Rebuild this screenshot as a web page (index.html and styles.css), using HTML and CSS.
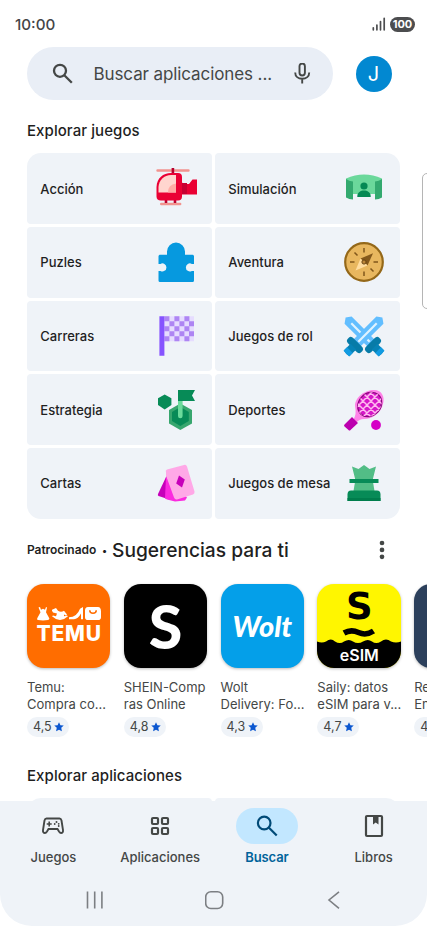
FILE: index.html
```html
<!DOCTYPE html>
<html lang="es">
<head>
<meta charset="utf-8">
<meta name="viewport" content="width=device-width, initial-scale=1">
<title>Buscar</title>
<link rel="stylesheet" href="styles.css">
</head>
<body>
<div class="phone">
  <header class="status">
    <span class="clock">10:00</span>
    <span class="status-right">
      <svg class="signal" width="14" height="14" viewBox="0 0 14 14"><path d="M1.300 10.800v2M4.900 8v4.800M8.500 4.600v8.200M12.200 1.300v11.500" stroke="#4c4d4f" stroke-width="1.700" stroke-linecap="round"/></svg>
      <span class="battery">100</span>
    </span>
  </header>

  <div class="top">
    <div class="search">
      <svg class="search-icon" width="22" height="22" viewBox="0 0 22 22" fill="none" stroke="#444746" stroke-width="2.300"><circle cx="8" cy="7.800" r="6"/><path d="M12.300 12.300l7.500 7.500"/></svg>
      <span class="search-text">Buscar aplicaciones ...</span>
      <svg class="mic" width="18" height="22" viewBox="0 0 18 22" fill="none" stroke="#444746" stroke-width="1.900"><rect x="6.500" y="0.500" width="5.400" height="12" rx="2.700"/><path d="M2.200 9.400c0 4 3 6.400 7 6.400s7-2.400 7-6.400M9.200 16v4.600"/></svg>
    </div>
    <span class="avatar">J</span>
  </div>

  <main>
    <h2 class="heading games">Explorar juegos</h2>
    <section class="grid">
      <div class="tile"><span>Acción</span>
        <svg viewBox="0 0 42 42"><path d="M2.500 2.500h31M6.200 36h19" stroke="#f2938f" stroke-width="2.400" stroke-linecap="round"/><path d="M17.900 0v6M11 30v5M20 30v5" stroke="#b8002d" stroke-width="2.600"/><path d="M1.500 19C2 10 8 5 16 5h7q4 0 4 4v5q0 2 2 2h5l3.500-4.500H42v15H27v2q0 4-4 4H6q-4.500 0-4.500-4z" fill="#ea0034"/><path d="M32 15v11h-5V15z" fill="#c70032"/><path d="M3.500 24.500V19C4 12 9 7 16 7h5v17.500z" fill="#ffd5cf"/><path d="M13 24.500q0-8 8-9v9z" fill="#ffaba5"/></svg></div>
      <div class="tile"><span>Simulación</span>
        <svg viewBox="0 -1.500 42 42"><path d="M3 9Q21 1 39 9v15.500H3z" fill="#6bd89b"/><path d="M3 9.500q3 2 7 2.500v18q-4 0-7-2zM39 9.500q-3 2-7 2.500v18q4 0 7-2z" fill="#33a96f"/><circle cx="21" cy="16.500" r="3.600" fill="#058954"/><path d="M14.300 27.500v-1c0-7.500 13.400-7.500 13.400 0v1z" fill="#058954"/></svg></div>
      <div class="tile"><span>Puzles</span>
        <svg viewBox="0 0 42 42"><path d="M5 13.700h7V10.500a9 9 0 0 1 18 0v3.200h7.500q1.500 0 1.500 1.500v7.700h-2.200a4 4 0 1 0 0 7H39v9.500q0 1.500-1.500 1.500H5q-1.500 0-1.500-1.500v-9.500h2a4 4 0 1 0 0-7h-2v-7.700Q3.500 13.700 5 13.700z" fill="#0699df"/></svg></div>
      <div class="tile"><span>Aventura</span>
        <svg viewBox="0 0 42 42"><circle cx="21" cy="21" r="18.800" fill="#e8b75f" stroke="#946819" stroke-width="2.200"/><path d="M21 7v4.500M21 30.500V35M7 21h4.500M30.500 21H35M11.500 11.500l3 3M27.500 27.500l3 3" stroke="#80571b" stroke-width="1.500"/><path d="M30 12.300L24.500 24.500l-7-7z" fill="#84591c"/><path d="M12.500 29.500l5-12 7 7z" fill="#ffdda0"/><circle cx="21" cy="21" r="2.100" fill="#bd873a" stroke="#694513"/></svg></div>
      <div class="tile"><span>Carreras</span>
        <svg viewBox="0 0 42 42"><path d="M9.400 1.300h29.600v25H9.400z" fill="#e6dcff"/><path d="M16.900 1.300V26.300M26.900 1.300V26.300M36.500 1.300V26.300" stroke="#ae85f3" stroke-width="5" stroke-dasharray="0 5 5 0"/><path d="M11.900 1.300V26.300M21.900 1.300V26.300M31.900 1.300V26.300" stroke="#ae85f3" stroke-width="5" stroke-dasharray="5"/><path d="M4.400 1.300h5v39.500h-5z" fill="#8653ff"/></svg></div>
      <div class="tile"><span>Juegos de rol</span>
        <svg viewBox="0 0 42 42">
          <g transform="rotate(-45 21 21)"><path d="M16-1.500L21-5l5 3.500V32H16z" fill="#62beff"/><path d="M21 3v26" stroke="#e0f3ff" stroke-width="2.200"/><path d="M11.500 33q0-3 4-3h11q4 0 4 3v2q0 2-3 2.500h-13q-3-.5-3-2.500z" fill="#077ba8"/><path d="M17 36h8v9.500q-4 1.500-8 0z" fill="#0782b5"/><path d="M17 41h8v5h-8z" fill="#119be2"/></g>
          <g transform="rotate(45 21 21)"><path d="M16-1.500L21-5l5 3.500V32H16z" fill="#62beff"/><path d="M21 3v26" stroke="#e0f3ff" stroke-width="2.200"/><path d="M11.500 33q0-3 4-3h11q4 0 4 3v2q0 2-3 2.500h-13q-3-.5-3-2.500z" fill="#077ba8"/><path d="M17 36h8v9.500q-4 1.500-8 0z" fill="#0782b5"/><path d="M17 41h8v5h-8z" fill="#119be2"/></g>
        </svg></div>
      <div class="tile"><span>Estrategia</span>
        <svg viewBox="0 0 42 42"><path d="M9.700 5.500l6.700 3.700V16l-6.700 4.500L3 16V9.200z" fill="#078b57"/><path d="M25.300 14.500L37 21v13.500L25.300 41 14 34.500V21z" fill="#37a66e"/><path d="M25.300 18l8.500 5v9L25.300 37 17 32v-9z" fill="#078b57"/><path d="M25.300 11v16" stroke="#6bda9b" stroke-width="4.600" stroke-linecap="round"/><path d="M23 1h17l-3 5.500 3 5.500H23z" fill="#078b57"/></svg></div>
      <div class="tile"><span>Deportes</span>
        <svg viewBox="0 0 42 42"><defs><clipPath id="strings"><ellipse cx="26.700" cy="15.500" rx="11" ry="13" transform="rotate(42 26.700 15.500)"/></clipPath></defs><path d="M10 31Q14 26 12 17C12 8 22 1 31 1c8 0 11 7 9 14-2 9-11 15-19 15q-5 0-8 4z" fill="#ff83e8"/><ellipse cx="26.700" cy="15.500" rx="11" ry="13" transform="rotate(42 26.700 15.500)" fill="#d617c8" stroke="#8b087d" stroke-width="1.300"/><g clip-path="url(#strings)" stroke="#ffb9ef" stroke-width="1.500"><path d="M5 13l24 24M8.500 8.500l24 24M12 4l24 24M15.500-.5l24 24M19-5l24 24M24-8l24 24M8 24L37-5M12 28L41-1M16 32L45 3M20 36L49 7M4 20L33-9"/></g><path d="M1.500 35.500L9 28l6 6-7.500 7q-1 1-2 0l-4-3.500q-1-1 0-2z" fill="#bc00af"/><circle cx="33" cy="36" r="4.900" fill="#d500c6"/></svg></div>
      <div class="tile"><span>Cartas</span>
        <svg viewBox="0 -2.500 42 42"><path d="M3 29.500l8.500-18 7 24q-7-1-15-4-1-.5-.5-2z" fill="#c600ba"/><path d="M10 34L11 12l21 21-2 3-10 1-8-2z" fill="#fb2adf"/><path d="M11 8q-1-2 1-3l17-4.500q2-.8 3 1.500L39.500 27q.5 2-1.500 3l-16 5q-2 .5-3-2L11 11z" fill="#ffa8e7"/><path d="M24 11l5.800 4L27 23l-5.800-4z" fill="#c600ba"/></svg></div>
      <div class="tile"><span>Juegos de mesa</span>
        <svg viewBox="0 -2 42 42"><path d="M9 2.500l6.500 2.500L21 1l5.500 4L33 2.500l-3.500 14h-17z" fill="#52bd86"/><path d="M12 18h18l1.500 9h-21z" fill="#52bd86"/><path d="M6.500 15h29v4h-29z" fill="#078b57"/><path d="M8 26.500h26q3.500 0 3.500 4V37h-33v-6.500q0-4 3.500-4z" fill="#078b57"/><path d="M4.500 34h33v3h-33z" fill="#007d4c"/></svg></div>
    </section>

    <div class="sponsored">
      <span class="label">Patrocinado</span><span class="dot">•</span><h2>Sugerencias para ti</h2>
      <svg class="more" width="6" height="20" viewBox="0 0 6 20" fill="#444746"><circle cx="3" cy="3" r="2.350"/><circle cx="3" cy="9.900" r="2.350"/><circle cx="3" cy="16.800" r="2.350"/></svg>
    </div>

    <section class="apps">
      <article class="app">
        <div class="logo temu">
          <svg width="64" height="14" viewBox="0 0 64 15" preserveAspectRatio="none" fill="#fff"><path d="M3 0l1 3 2-1 2 1 1-3 1 .5-1 5 3 6q1 2-1 2.500-5 1-10 0-1.500-.5-.5-2.500l3-6-2-5z"/><path d="M15 3l4-2 2 3q3 2 6 0l3 4-1 1-2-1v2l3-1 1 1q-8 8-16 0l1-1 3 1 1-3-4-1-1-2z"/><path d="M32 11q8 0 11-9l3-2v13h-2V7q-3 6-7 6h-5z"/><path fill-rule="evenodd" d="M51 0h10q3 0 3 5v6q0 3-3 3H51q-3 0-3-3V4q0-4 3-4zm1 3.500q0 4 4 4t4-4h-1.500q0 2.500-2.500 2.500t-2.500-2.500z"/></svg>
          <span>TEMU</span>
        </div>
        <p>Temu:<br>Compra co...</p><span class="rating">4,5 <svg viewBox="0 0 12 12"><path d="M6 .3l1.700 3.500 4 .5-3 2.700.8 4L6 9.200 2.500 11l.8-4-3-2.700 4-.5z"/></svg></span>
      </article>
      <article class="app">
        <div class="logo shein"><span>S</span></div>
        <p>SHEIN-Comp<br>ras Online</p><span class="rating">4,8 <svg viewBox="0 0 12 12"><path d="M6 .3l1.700 3.500 4 .5-3 2.700.8 4L6 9.200 2.500 11l.8-4-3-2.700 4-.5z"/></svg></span>
      </article>
      <article class="app">
        <div class="logo wolt"><span>Wolt</span></div>
        <p>Wolt<br>Delivery: Fo...</p><span class="rating">4,3 <svg viewBox="0 0 12 12"><path d="M6 .3l1.700 3.500 4 .5-3 2.700.8 4L6 9.200 2.500 11l.8-4-3-2.700 4-.5z"/></svg></span>
      </article>
      <article class="app">
        <div class="logo saily"><svg width="84" height="84" viewBox="0 0 84 84"><path d="M0 57.500q5 2 9 0 5-4 9 0 5 3 9 0 5-3 9 0 5 3 10 0 5-3 9 0 4 3 9 0 5-4 10 0 5 2 10 0v27H0z"/><path d="M27 49q7-4 14.500-.5T56.500 47" fill="none" stroke="#000" stroke-width="5.500"/></svg><b>S</b><span>eSIM</span></div>
        <p>Saily: datos<br>eSIM para v...</p><span class="rating">4,7 <svg viewBox="0 0 12 12"><path d="M6 .3l1.700 3.500 4 .5-3 2.700.8 4L6 9.200 2.500 11l.8-4-3-2.700 4-.5z"/></svg></span>
      </article>
      <article class="app">
        <div class="logo revolut"></div>
        <p>Re<br>En</p><span class="rating">4</span>
      </article>
    </section>
    <h2 class="heading explore">Explorar aplicaciones</h2>
    <div class="peek"><i></i><i></i></div>
  </main>

  <footer class="bottom">
    <nav class="tabs">
      <div class="tab"><div class="pill"><svg width="24" height="20" viewBox="0 0 24 20" fill="none" stroke="#444746" stroke-width="1.900"><path d="M5.500 2.500h13q1.500 0 2 2l1.500 9.500q.3 3-2 3-1 0-2-1.500L16.500 13h-9L6 15.500Q5 17 4 17q-2.300 0-2-3L3.500 4.500q.5-2 2-2z"/><path d="M8.200 5.500v5M5.700 8h5" stroke-width="1.600"/><g fill="#444746" stroke="none"><circle cx="15.500" cy="6" r="1"/><circle cx="13.700" cy="8" r=".9"/><circle cx="17.700" cy="7.800" r=".9"/><circle cx="17.700" cy="10" r=".9"/></g></svg></div><span>Juegos</span></div>
      <div class="tab"><div class="pill"><svg width="20" height="20" viewBox="0 0 20 20" fill="none" stroke="#444746" stroke-width="2.200"><rect x="2" y="2" width="6" height="6" rx="1"/><rect x="12" y="2" width="6" height="6" rx="1"/><rect x="2" y="12" width="6" height="6" rx="1"/><rect x="12" y="12" width="6" height="6" rx="1"/></svg></div><span>Aplicaciones</span></div>
      <div class="tab active"><div class="pill"><svg width="22" height="22" viewBox="0 0 22 22" fill="none" stroke="#004a77" stroke-width="2.200"><circle cx="8.200" cy="8" r="6.300"/><path d="M12.700 12.500l8 8"/></svg></div><span>Buscar</span></div>
      <div class="tab"><div class="pill"><svg width="20" height="24" viewBox="0 0 20 24" fill="none" stroke="#444746" stroke-width="2.200"><rect x="2" y="2" width="16" height="20" rx="1"/><path d="M9 2h5.500v8.500L11.700 8.500 9 10.500z" fill="#444746" stroke="none"/></svg></div><span>Libros</span></div>
    </nav>
    <div class="system">
      <svg width="18" height="20" viewBox="0 0 18 20"><path d="M1.500 1.500v17M8.700 1.500v17M15.900 1.500v17" stroke="#7c7f83" stroke-width="1.600"/></svg>
      <svg width="20" height="20" viewBox="0 0 20 20"><rect x="0.700" y="1.700" width="17" height="16.800" rx="5.200" fill="none" stroke="#7c7f83" stroke-width="1.600"/></svg>
      <svg width="14" height="20" viewBox="0 0 14 20"><path d="M12 1.800L2 10l10 8.300" fill="none" stroke="#7c7f83" stroke-width="1.600"/></svg>
    </div>
  </footer>
  <div class="edge-handle"></div>
</div>
</body>
</html>
```

FILE: styles.css
```css
* { box-sizing: border-box; }
body { margin: 0; background: #fff; font-family: Inter, "Liberation Sans", sans-serif; color: #1f1f1f; }
h2, p { margin: 0; font-weight: 500; }
svg { display: block; flex: none; }
.phone { position: relative; width: 427px; height: 926px; overflow: hidden; display: flex; flex-direction: column; }
.status { height: 47px; padding: 1px 12px 0 15px; display: flex; justify-content: space-between; align-items: center; }
.clock { font-size: 15.2px; font-weight: 500; color: #444547; }
.status-right { display: flex; align-items: center; gap: 4px; }
.battery { width: 25px; height: 15px; border-radius: 8px; background: #4c4d4f; color: #fff; font-size: 11px; line-height: 15px; font-weight: 700; text-align: center; }
.top { display: flex; align-items: center; height: 53px; padding-left: 27px; }
.search { width: 306px; height: 53px; border-radius: 27px; background: #e9eef6; display: flex; align-items: center; padding: 0 22px 0 25px; }
.search-text { margin-left: 19.500px; width: 178px; font-size: 17px; letter-spacing: -0.1px; color: #444746; white-space: nowrap; }
.mic { margin-left: auto; }
.avatar { width: 36px; height: 36px; margin-left: 22.500px; border-radius: 50%; background: #0288d1; color: #fff; font-size: 20px; line-height: 36px; text-align: center; }
main { flex: 1; min-height: 0; overflow: hidden; }
.heading { font-size: 15px; line-height: 20px; letter-spacing: 0.07px; white-space: nowrap; }
.games { margin: 21px 0 12.300px 27px; }
.grid { margin-left: 27px; width: 373px; display: grid; grid-template-columns: 185px 185px; grid-auto-rows: 70.670px; gap: 3px; border-radius: 14px; overflow: hidden; }
.tile { border-radius: 4px; background: #eff3f8; display: flex; align-items: center; justify-content: space-between; padding: 0 15.500px 0 13.300px; font-size: 13px; font-weight: 500; white-space: nowrap; }
.tile svg { width: 42px; height: 42px; overflow: visible; }
.sponsored { height: 65.400px; padding: 0 42px 3px 27px; display: flex; align-items: center; white-space: nowrap; }
.label { width: 70px; font-size: 12px; font-weight: 600; letter-spacing: -0.05px; }
.dot { width: 15px; text-align: center; font-size: 10px; }
.sponsored h2 { font-size: 19.200px; font-weight: 450; }
.more { margin-left: auto; }
.apps { display: flex; gap: 13.400px; padding-left: 27px; }
.app { width: 83.400px; flex: none; }
.logo { position: relative; width: 83.400px; height: 84px; border-radius: 17px; overflow: hidden; box-shadow: 0 1px 3px #0004; display: flex; align-items: center; justify-content: center; color: #fff; }
.temu { flex-direction: column; background: #ff6d00; }
.temu span { font: 800 21px/20px Inter, sans-serif; letter-spacing: 0.8px; margin: 3px -0.8px 0 0; }
.shein { background: #000; }
.shein span { font: 900 61px/84px Lato, sans-serif; }
.wolt { background: #049fe9; }
.wolt span { font: italic 900 29px/30px Lato, sans-serif; }
.saily { background: #fff600; }
.saily b { position: absolute; left: 0; width: 84px; top: 4px; text-align: center; color: #000; font: 700 37px/38px "DejaVu Sans", sans-serif; }
.saily span { position: absolute; left: 0; width: 84px; bottom: 4px; text-align: center; font: 600 16px/18px Inter, sans-serif; }
.revolut { background: #2c405c; }
.app p { margin-top: 11px; font-size: 13px; line-height: 17px; font-weight: 400; color: #444746; white-space: nowrap; }
.rating { margin-top: 4px; width: 42px; height: 20px; border-radius: 10px; background: #eff3f8; display: flex; align-items: center; padding-left: 6px; gap: 2.500px; font-size: 12.500px; color: #444746; white-space: nowrap; }
.rating svg { width: 10px; height: 10px; fill: #0b57d0; }
.explore { margin: 28.600px 0 12px 27px; }
.peek { display: grid; grid-template-columns: 185px 185px; gap: 3px; margin-left: 27px; }
.peek i { height: 20px; background: #eff3f8; border-radius: 14px 4px 0 0; }
.peek i + i { border-radius: 4px 14px 0 0; }
.bottom { height: 125px; background: #eff3f8; border-radius: 0 0 32px 32px; }
.tabs { height: 74px; padding-top: 7px; display: grid; grid-template-columns: repeat(4, 1fr); }
.tab { display: flex; flex-direction: column; align-items: center; font-size: 13px; font-weight: 500; color: #444746; }
.pill { width: 62px; height: 36px; border-radius: 18px; display: flex; align-items: center; justify-content: center; }
.tab span { margin-top: 5px; line-height: 16px; }
.active { color: #00639b; font-weight: 600; letter-spacing: -0.1px; }
.active .pill { background: #c2e7ff; }
.system { display: flex; justify-content: space-between; align-items: center; padding: 15px 86px 0; }
.system svg:nth-child(2) { margin-right: 2px; }
.edge-handle { position: absolute; left: 422px; top: 173px; width: 12px; height: 136px; border: 1px solid #b5b5b5; border-radius: 5px; background: #fff; }
```
